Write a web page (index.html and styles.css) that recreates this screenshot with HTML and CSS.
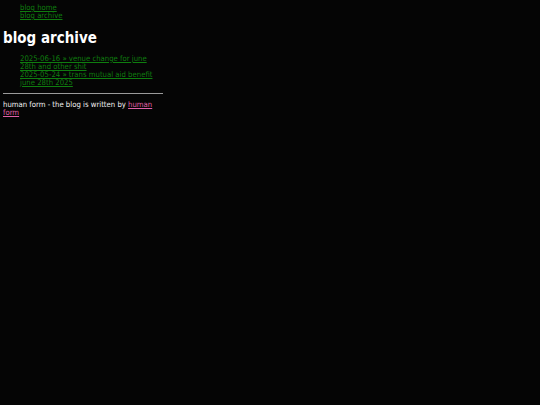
FILE: index.html
```html
<!DOCTYPE html>
<html>
<head>
<meta charset="utf-8">
<title>blog archive</title>
<link rel="stylesheet" href="styles.css">
</head>
<body>
<main class="page">
  <ul class="nav">
    <li><a href="#">blog home</a></li>
    <li><a href="#">blog archive</a></li>
  </ul>
  <h1 class="title">blog archive</h1>
  <ul class="posts">
    <li><a href="#">2025-06-16 » venue change for june 28th and other shit</a></li>
    <li><a href="#">2025-05-24 » trans mutual aid benefit june 28th 2025</a></li>
  </ul>
  <hr class="rule">
  <p class="footer">human form - the blog is written by <a class="pink" href="#">human form</a></p>
</main>
</body>
</html>
```
FILE: styles.css
```css
html { background: #050505; }
body {
  margin: 4px 3px 3px;
  background: #050505;
  color: #f2f2f2;
  font-family: "DejaVu Sans Condensed", "DejaVu Sans", sans-serif;
  font-size: 7.7px;
  line-height: 8px;
}
.page { width: 160px; }
a { color: #0f7d0f; }
a.pink { color: #e060a8; }
.nav, .posts {
  list-style: none;
  margin: 0;
  padding-left: 17px;
}
.posts { margin-top: 8px; }
.title {
  font-size: 15px;
  line-height: 18px;
  margin: 9px 0 0;
  font-weight: bold;
  color: #fff;
}
.rule {
  border: 0;
  border-top: 1px solid #9a9a9a;
  margin: 6px 0 7px;
  height: 0;
}
.footer { margin: 0; }
```
